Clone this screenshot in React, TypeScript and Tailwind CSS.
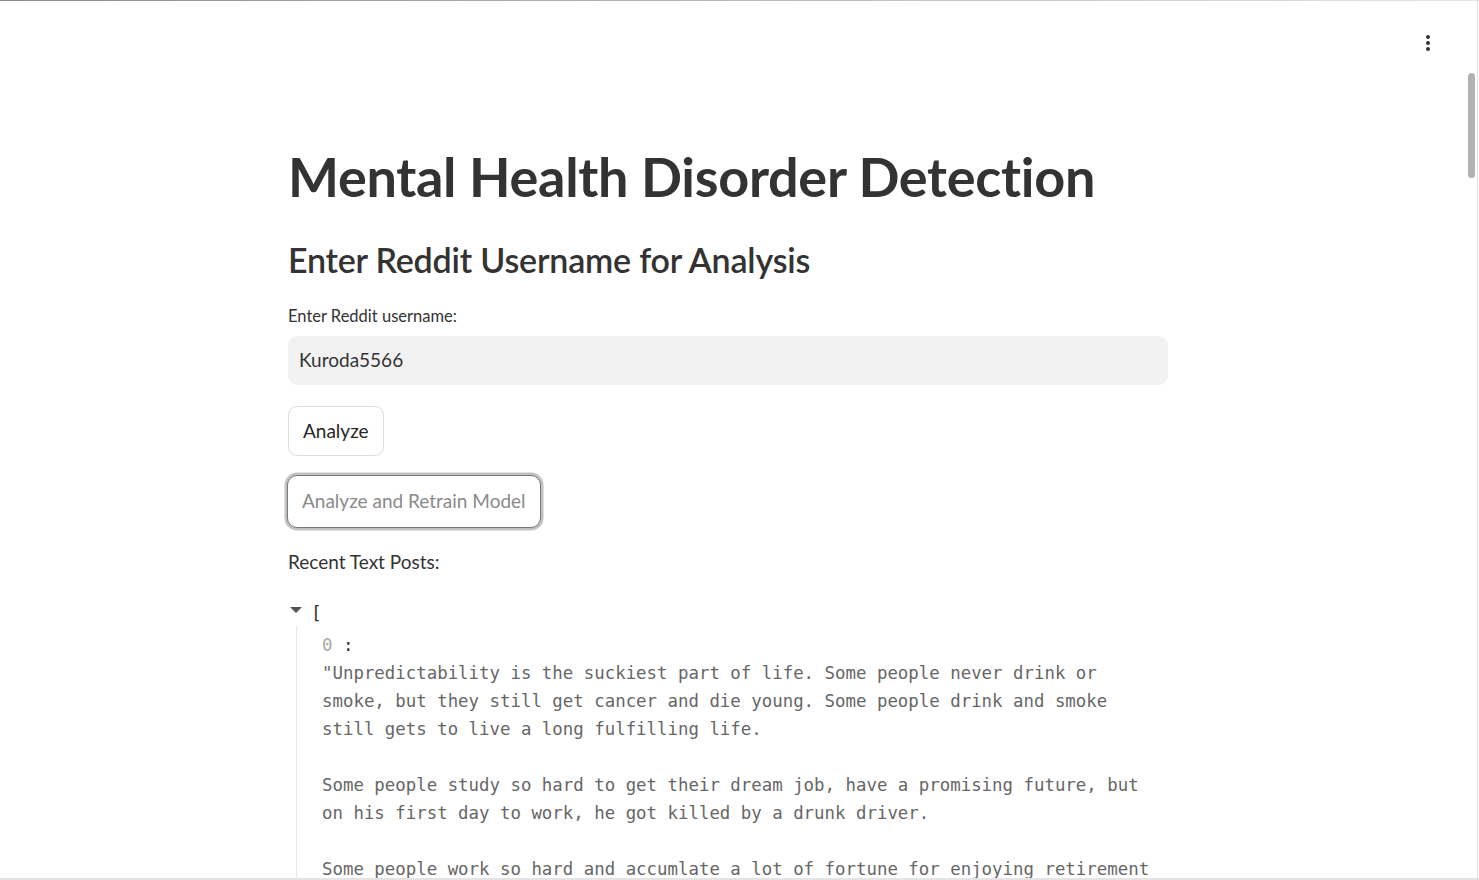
import React from 'react';

const postLines = [
  '"Unpredictability is the suckiest part of life. Some people never drink or',
  'smoke, but they still get cancer and die young. Some people drink and smoke',
  'still gets to live a long fulfilling life.',
  '',
  'Some people study so hard to get their dream job, have a promising future, but',
  'on his first day to work, he got killed by a drunk driver.',
  '',
  'Some people work so hard and accumlate a lot of fortune for enjoying retirement',
];

const sans = { fontFamily: 'Lato, "Noto Sans", sans-serif' };
const mono = { fontFamily: '"DejaVu Sans Mono", "Liberation Mono", monospace' };

const App = () => {
  return (
    <div className="relative w-[1479px] h-[880px] overflow-hidden bg-white" style={sans}>
      {/* window frame */}
      <div className="absolute top-0 left-0 right-0 h-px bg-gradient-to-r from-[#8c8c8c] to-[#e6e6e6]" />
      <div className="absolute top-0 bottom-0 right-[1px] w-px bg-[#e2e2e2]" />
      <div className="absolute bottom-0 left-0 right-0 h-[2px] bg-[#e4e4e4]" />
      {/* scrollbar thumb */}
      <div className="absolute right-[4px] top-[73px] w-[7px] h-[105px] rounded-full bg-[#b3b3b3]" />
      {/* main menu */}
      <button className="absolute top-[33px] left-[1420px] w-[16px] h-[20px] flex items-center justify-center">
        <svg width="4" height="16" viewBox="0 0 4 16">
          <circle cx="2" cy="2" r="2" fill="#333" />
          <circle cx="2" cy="8" r="2" fill="#333" />
          <circle cx="2" cy="14" r="2" fill="#333" />
        </svg>
      </button>

      <div className="ml-[288px] w-[880px] pt-[142px] flex flex-col text-[#31333f]">
        <h1 className="text-[54px] font-bold leading-[70px] text-[#333] tracking-[-0.3px]">
          Mental Health Disorder Detection
        </h1>
        <h2 className="mt-[25px] text-[34px] font-semibold leading-[46px] text-[#333] tracking-[-0.2px]">
          Enter Reddit Username for Analysis
        </h2>
        <label className="mt-[21px] text-[16.5px] leading-[24px] text-[#333]">Enter Reddit username:</label>
        <div className="mt-[8px] h-[49px] rounded-[9px] bg-[#f2f2f2] flex items-center px-[11px]">
          <span className="text-[19px] text-[#333]">Kuroda5566</span>
        </div>
        <div className="mt-[21px]">
          <button className="h-[50px] px-[14px] rounded-[9px] border border-[#dcdcdc] bg-white text-[19px] text-[#262626]">
            Analyze
          </button>
        </div>
        <div className="mt-[19px] -ml-[1px]">
          <button className="h-[53px] px-[14px] rounded-[10px] border-[1.5px] border-[#777] bg-white text-[19px] text-[#8a8a8a] shadow-[0_0_0_2.5px_#c2c2c2]">
            Analyze and Retrain Model
          </button>
        </div>
        <p className="mt-[20px] text-[19px] leading-[28px] text-[#333]">Recent Text Posts:</p>

        <div className="mt-[23px] flex items-center gap-[8px]">
          <svg width="14" height="8" viewBox="0 0 14 8" className="ml-[1px] -mt-[6px]">
            <path d="M1 1 L13 1 L7 7 Z" fill="#555" />
          </svg>
          <span className="text-[18px] text-[#333]" style={mono}>[</span>
        </div>
        <div className="ml-[8px] border-l border-[#e6e6e6] pl-[25px] pb-[20px]" style={mono}>
          <div className="pt-[5px] text-[17.4px] leading-[28px]">
            <span className="text-[#a8a8a8]">0</span>
            <span className="text-[#333]"> :</span>
          </div>
          <pre className="text-[17.4px] leading-[28px] text-[#666] whitespace-pre" style={mono}>
            {postLines.join('\n')}
          </pre>
        </div>
      </div>
    </div>
  );
};

export default App;
